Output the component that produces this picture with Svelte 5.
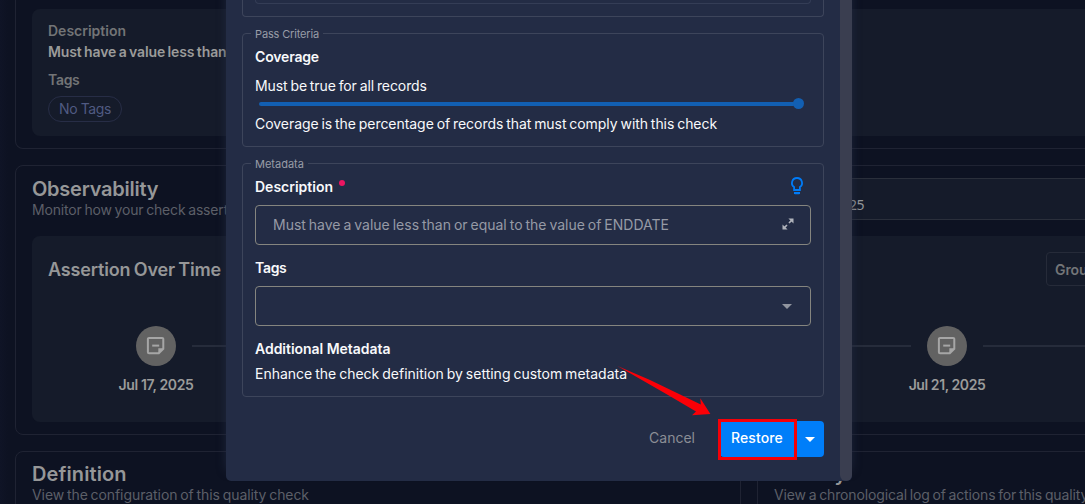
<script>
  const left = 'Jul 17, 2025';
  const right = 'Jul 21, 2025';
</script>

{#snippet note()}
  <div class="dot">
    <svg width="20" height="20" viewBox="0 0 20 20" fill="none" stroke="#a6a6a6" stroke-width="2">
      <path d="M3 1.9h13.2a1.1 1.1 0 0 1 1.1 1.1v9.8l-4.5 4.5H3A1.1 1.1 0 0 1 1.9 16.2V3A1.1 1.1 0 0 1 3 1.9z" />
      <path d="M12.3 18v-5.7h5.7z" fill="#a6a6a6" stroke="none" />
      <path d="M6.2 9.6h7" />
    </svg>
  </div>
{/snippet}

<div class="app">
  <main class="page">
    <section class="card summary">
      <div class="panel facts">
        <p class="key d14">Description</p>
        <p class="value">Must have a value less than</p>
        <p class="key tags">Tags</p>
        <span class="pill">No Tags</span>
      </div>
    </section>

    <section class="card observe">
      <header>
        <div>
          <h2 class="obs">Observability</h2>
          <p class="sub mon">Monitor how your check assert</p>
        </div>
        <div class="date"><span>25</span></div>
      </header>
      <div class="panel chart">
        <div class="chart-head">
          <h3>Assertion Over Time</h3>
          <div class="group">Grou</div>
        </div>
        <div class="timeline">
          <div class="stop">{@render note()}<b class="j17">{left}</b></div>
          <i class="line"></i>
          <div class="stop">{@render note()}<b class="j21">{right}</b></div>
          <i class="line tail"></i>
        </div>
      </div>
    </section>

    <div class="bottom">
      <section class="card def">
        <h2 class="dfn">Definition</h2>
        <p class="sub">View the configuration of this quality check</p>
      </section>
      <section class="card def">
        <h2 class="act">Activity</h2>
        <p class="sub log">View a chronological log of actions for this quality</p>
      </section>
    </div>
  </main>

  <div class="modal">
    <div class="content">
      <div class="prev"><div class="prev-field"></div></div>

      <fieldset class="criteria">
        <legend class="lg1">Pass Criteria</legend>
        <h4 class="cov">Coverage</h4>
        <p class="rule">Must be true for all records</p>
        <div class="slider"><span class="track"></span><span class="thumb"></span></div>
        <p class="hint">Coverage is the percentage of records that must comply with this check</p>
      </fieldset>

      <fieldset class="meta">
        <legend class="lg2">Metadata</legend>
        <div class="row">
          <h4>Description</h4><span class="req"></span>
          <svg class="bulb" width="14" height="18" viewBox="0 0 14 18">
            <path d="M7 1a5 5 0 0 0-2.9 9.1V13h5.8v-2.9A5 5 0 0 0 7 1z" fill="none" stroke="#007bf7" stroke-width="1.8" />
            <path d="M4 15.1h6v1.1l-.8 1H4.8l-.8-1z" fill="#007bf7" />
          </svg>
        </div>
        <div class="input">
          <span class="ph">Must have a value less than or equal to the value of ENDDATE</span>
          <svg width="12" height="12" viewBox="0 0 12 12" stroke="#b0b3bb" fill="#b0b3bb">
            <path d="M6.4.5h5.1v5.1z" stroke="none" />
            <path d="M.5 6.4v5.1h5.1z" stroke="none" />
            <path d="M7 5l3-3M5 7l-3 3" stroke-width="1.7" />
          </svg>
        </div>
        <h4 class="tagl">Tags</h4>
        <div class="input select">
          <svg width="10" height="5" viewBox="0 0 10 5"><path d="M0 0h10L5 5z" fill="#91959f" /></svg>
        </div>
        <h4 class="addl">Additional Metadata</h4>
        <p class="enh">Enhance the check definition by setting custom metadata</p>
      </fieldset>

      <footer>
        <span class="cancel">Cancel</span>
        <div class="split">
          <span class="restore">Restore</span>
          <span class="more"><svg width="10" height="5" viewBox="0 0 10 5"><path d="M0 0h10L5 5z" fill="#fff" /></svg></span>
        </div>
      </footer>
    </div>
    <div class="scroll"></div>
  </div>

  <div class="mark"></div>
  <svg class="arrow" width="100" height="56" viewBox="615 362 100 56">
    <path d="M617.5 366L650 380l50.8 24.5-.5-6.2L710.4 414l-18.4 1.2 4-3.7-29.3-17.2z" fill="#fb0007" />
  </svg>
</div>

<style>
  :global(body) { margin: 0; background: #0d1222; }
  * { box-sizing: border-box; }
  p, h2, h3, h4 { margin: 0; white-space: nowrap; }
  .app {
    position: relative;
    width: 1085px;
    height: 504px;
    overflow: hidden;
    background: linear-gradient(90deg, #0f1426 0, #0d1222 8px);
    font-family: Inter, sans-serif;
    font-size: 14px;
    line-height: 20px;
  }

  .page { width: 1500px; padding-left: 15px; display: flex; flex-direction: column; gap: 16px; }
  .card { border: 1px solid #1f2333; border-radius: 8px; }
  .panel { background: #151b2a; border-radius: 8px; }
  .summary { height: 149px; border-top: 0; border-radius: 0 0 8px 8px; padding: 9px 16px 0; }
  .facts { height: 127px; padding: 12px 16px 0; }
  .key { color: #727476; font-weight: 600; letter-spacing: 0; }
  .value { color: #9b9b9a; font-weight: 600; letter-spacing: -0.11px; word-spacing: -1px; margin-top: 1px; }
  .tags { margin-top: 8px; letter-spacing: -0.3px; }
  .pill {
    display: flex; align-items: center; justify-content: center;
    width: 74px; height: 26px; margin-top: 6px;
    border: 1px solid #272d46; border-radius: 13px;
    color: #505a82; letter-spacing: -0.39px;
  }
  .observe { height: 270px; padding: 0 16px; }
  header { display: flex; height: 70px; justify-content: space-between; }
  header > div:first-child { padding-top: 11px; }
  h2 { font-size: 20px; line-height: 24px; font-weight: 560; color: #969798; }
  .obs { letter-spacing: -0.25px; }
  .dfn { letter-spacing: 0.1px; }
  .act { letter-spacing: -0.3px; }
  .sub { color: #5c5f68; letter-spacing: -0.08px; word-spacing: -1px; margin-top: -1px; }
  .mon { letter-spacing: -0.17px; }
  .date {
    width: 720px; height: 42px; margin-top: 12px; padding: 0 0 0 85px;
    border: 1px solid #2a2f3b; background: #151b2a;
    font: 14px/52px "Noto Sans", sans-serif; letter-spacing: -0.6px; color: #96989b;
  }
  .chart { height: 186px; padding: 16px 16px 0; }
  .chart-head { display: flex; height: 34px; align-items: center; }
  h3 { flex: 0 0 998px; padding-top: 2px; font-size: 18px; font-weight: 600; letter-spacing: -0.17px; word-spacing: -1px; color: #969798; }
  .group {
    flex: none; width: 120px; height: 34px; padding-left: 8px; line-height: 33px;
    border: 1px solid #262b39; border-radius: 4px; color: #737578; font-weight: 600;
    letter-spacing: -0.1px;
  }
  .timeline { display: flex; padding: 40px 0 0 58px; }
  .stop { flex: none; width: 100px; display: flex; flex-direction: column; align-items: center; }
  .dot { width: 40px; height: 40px; border-radius: 50%; background: #626262; display: flex; align-items: center; justify-content: center; }
  .stop b { margin-top: 9px; font-weight: 600; color: #9b9b9a; white-space: nowrap; }
  .j17 { letter-spacing: -0.36px; }
  .j21 { letter-spacing: -0.42px; }
  .line { flex: 0 0 719px; height: 2px; margin: 19px -14px 0; background: #262c3b; }
  .tail { flex-basis: 300px; }
  .bottom { display: flex; gap: 16px; }
  .def { flex: 0 0 726px; height: 200px; padding: 10px 16px 0; }
  .log { letter-spacing: -0.14px; }

  .modal {
    position: absolute; left: 226px; top: 0; width: 626px; height: 481px;
    display: flex; background: #232c45; border-radius: 0 0 5px 5px;
    box-shadow: 0 -10px 10px rgba(35, 44, 69, 0.7);
    color: #f8f9fb;
  }
  .content { width: 614px; padding: 0 16px; }
  .scroll { width: 12px; background: #3a3e50; border-radius: 0 0 6px 6px; }
  .prev { height: 17px; border: 1px solid #3d455b; border-top: 0; border-radius: 0 0 4px 4px; padding: 0 12px; width: 582px; }
  .prev-field { height: 4px; border: 1px solid #343d56; border-top: 0; border-radius: 0 0 4px 4px; }
  fieldset { margin: 0; border: 1px solid #3d455b; border-radius: 4px; padding: 0 12px; width: 582px; min-width: 0; }
  legend { height: 13px; margin-left: -4px; padding: 0 4px; font-size: 11px; line-height: 15px; font-weight: 400; color: #989ca7; }
  .lg1 { letter-spacing: -0.15px; }
  .lg2 { letter-spacing: 0; }
  h4 { font-size: 14px; font-weight: 600; }
  .criteria { height: 120px; margin-top: 10px; padding-top: 7px; }
  .cov { letter-spacing: -0.17px; }
  .rule { margin-top: 9px; letter-spacing: -0.085px; word-spacing: -1px; }
  .slider { display: flex; align-items: center; height: 12px; margin: 2px 4px 0; }
  .track { width: 536px; height: 4px; border-radius: 2px; background: #125fb2; }
  .thumb { width: 11px; height: 11px; margin: -1px 0 0 -2px; border-radius: 50%; background: #125fb2; }
  .hint { margin-top: 4px; letter-spacing: -0.05px; word-spacing: -1px; }
  .meta { height: 240px; margin-top: 10px; padding-top: 7px; }
  .row { display: flex; height: 20px; }
  .req { width: 6px; height: 6px; margin: 3px 0 0 6px; border-radius: 50%; background: #ec1561; }
  .bulb { margin-left: auto; margin-right: 7px; }
  .input {
    display: flex; align-items: center; justify-content: space-between;
    height: 40px; margin-top: 8px; padding: 0 17px; border: 1px solid #85857f; border-radius: 4px;
    color: #969aa5;
  }
  .ph { letter-spacing: 0; word-spacing: -1px; }
  .input svg { margin-right: -1px; margin-top: -3px; }
  .tagl { margin-top: 13px; letter-spacing: -0.3px; }
  .select { justify-content: flex-end; }
  .input.select svg { margin: 1px 1px 0 0; }
  .addl { margin-top: 13px; letter-spacing: -0.03px; }
  .enh { margin-top: 5px; word-spacing: -1px; }
  footer { display: flex; justify-content: flex-end; margin-top: 24px; height: 36px; line-height: 34px; }
  .cancel { margin-right: 25px; color: #8b8e95; }
  .split { display: flex; width: 104px; background: #007ef9; border-radius: 4px; overflow: hidden; }
  .restore { width: 76px; padding-left: 11px; font-weight: 550; letter-spacing: 0.1px; color: #fff; }
  .more { flex: 1; display: flex; align-items: center; justify-content: center; }

  .mark { position: absolute; left: 718px; top: 419px; width: 79px; height: 41px; border: 3px solid #f50008; }
  .arrow { position: absolute; left: 615px; top: 362px; }
</style>
